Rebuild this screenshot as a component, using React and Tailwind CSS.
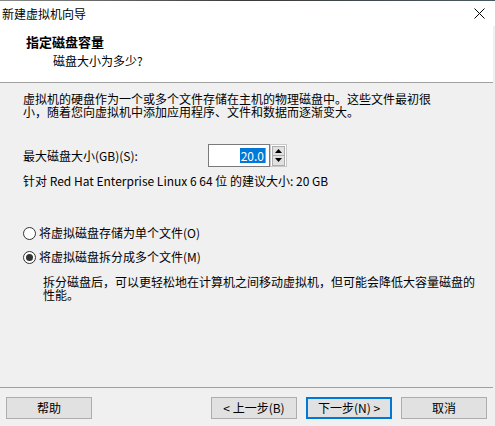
import React from 'react';

const WinButton = ({ children, primary }) => (
  <button
    type="button"
    className={
      primary
        ? 'flex h-[22px] w-[86px] items-center justify-center border-2 border-[#0078d7] bg-[#e1e1e1] text-[12px] leading-[16px] text-black'
        : 'flex h-[22px] w-[86px] items-center justify-center border border-[#adadad] bg-[#e1e1e1] text-[12px] leading-[16px] text-black'
    }
  >
    {children}
  </button>
);

const Radio = ({ checked, label }) => (
  <div className="flex h-[16px] items-center pl-[23px]">
    <span className="flex h-[13px] w-[13px] items-center justify-center rounded-full border border-[#333333] bg-white">
      {checked && <span className="h-[7px] w-[7px] rounded-full bg-[#333333]" />}
    </span>
    <span className="ml-[3px] text-[12px] leading-[16px]">{label}</span>
  </div>
);

const Spinner = () => (
  <div className="flex h-[23px] w-[17px] flex-col justify-center border border-[#c8c8c8] bg-white px-px">
    <div className="flex h-[10px] items-center justify-center border border-[#adadad] bg-[#e1e1e1]">
      <svg width="7" height="4" viewBox="0 0 7 4">
        <path d="M3.5 0 L7 4 L0 4 Z" fill="#000" />
      </svg>
    </div>
    <div className="flex h-[10px] items-center justify-center border border-t-0 border-[#adadad] bg-[#e1e1e1]">
      <svg width="7" height="4" viewBox="0 0 7 4">
        <path d="M0 0 L7 0 L3.5 4 Z" fill="#000" />
      </svg>
    </div>
  </div>
);

export default function App() {
  return (
    <div className="flex h-[426px] w-[495px] flex-col overflow-hidden bg-[#f0f0f0] font-['Noto_Sans_CJK_SC',sans-serif] text-black">
      {/* window top edge */}
      <div className="h-px w-full bg-gradient-to-r from-[#8a8a8a] via-[#3a3a3a] to-[#4a5a60]" />

      {/* title bar */}
      <div className="flex h-[25px] items-center justify-between bg-white pl-[2px] pr-[10px]">
        <span className="text-[12px] leading-[16px]">新建虚拟机向导</span>
        <svg width="11" height="11" viewBox="0 0 11 11">
          <path d="M0.5 0.5 L10.5 10.5 M10.5 0.5 L0.5 10.5" stroke="#000" strokeWidth="1" />
        </svg>
      </div>

      {/* header */}
      <div className="h-[57px] w-[493px] border-b border-[#a0a0a0] bg-white pt-[8px]">
        <div className="pl-[26px] text-[13px] font-bold leading-[16px]">指定磁盘容量</div>
        <div className="mt-[3px] pl-[53px] text-[12px] leading-[16px]">磁盘大小为多少?</div>
      </div>

      {/* body */}
      <div className="pl-[23px] pt-[9px] text-[12px] leading-[13px]">
        虚拟机的硬盘作为一个或多个文件存储在主机的物理磁盘中。这些文件最初很
        <br />
        小，随着您向虚拟机中添加应用程序、文件和数据而逐渐变大。
      </div>

      <div className="mt-[26px] flex h-[23px] items-center pl-[23px]">
        <span className="w-[185px] text-[12px] leading-[16px]">最大磁盘大小(GB)(S):</span>
        <div className="flex h-[23px] w-[62px] items-center justify-end border border-[#7a7a7a] bg-white pr-[3px]">
          <span className="bg-[#0078d7] px-px text-[12px] leading-[15px] text-white">20.0</span>
          <span className="h-[15px] w-px bg-[#ff8728]" />
        </div>
        <Spinner />
      </div>

      <div className="mt-[6px] pl-[23px] text-[12px] leading-[16px]">
        针对 Red Hat Enterprise Linux 6 64 位 的建议大小: 20 GB
      </div>

      <div className="mt-[36px]">
        <Radio label="将虚拟磁盘存储为单个文件(O)" />
      </div>
      <div className="mt-[8px]">
        <Radio checked label="将虚拟磁盘拆分成多个文件(M)" />
      </div>
      <div className="mt-[10px] pl-[43px] text-[12px] leading-[13px]">
        拆分磁盘后，可以更轻松地在计算机之间移动虚拟机，但可能会降低大容量磁盘的
        <br />
        性能。
      </div>

      {/* footer */}
      <div className="mt-auto">
        <div className="h-px w-[493px] bg-[#a0a0a0]" />
        <div className="flex items-center pb-[7px] pl-[6px] pr-[8px] pt-[9px]">
          <WinButton>帮助</WinButton>
          <div className="ml-auto flex gap-[9px]">
            <WinButton>&lt; 上一步(B)</WinButton>
            <WinButton primary>下一步(N) &gt;</WinButton>
            <WinButton>取消</WinButton>
          </div>
        </div>
      </div>
    </div>
  );
}
